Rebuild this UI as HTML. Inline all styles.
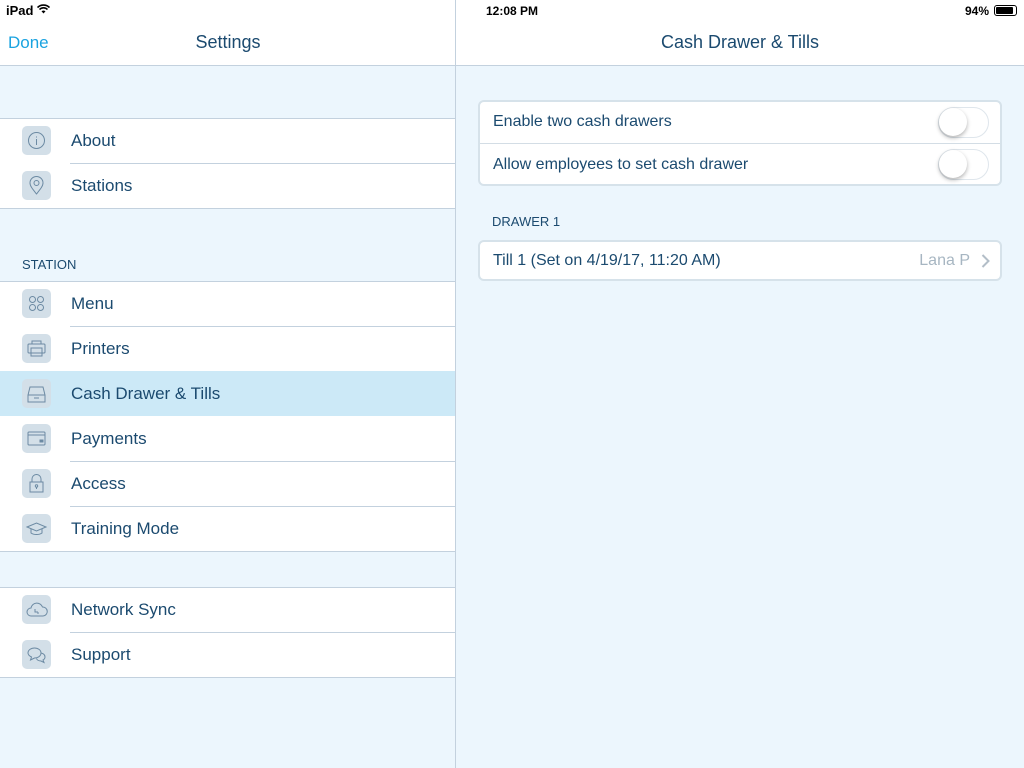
<!DOCTYPE html>
<html><head><style>
*{margin:0;padding:0;box-sizing:border-box}
body{width:1024px;height:768px;position:relative;background:#ecf6fd;font-family:"Liberation Sans",sans-serif;color:#1b4a6f;overflow:hidden}
.abs{position:absolute}
.bar{background:#fff;top:0;height:66px;border-bottom:1px solid #c3d1de}
.sec{left:0;width:455px;background:#fff;border-top:1px solid #c3d1de;border-bottom:1px solid #c3d1de}
.row{height:44px;position:relative;font-size:17px;line-height:43px;padding-left:71px}
.row+.row{margin-top:1px}
.row+.row::before{content:"";position:absolute;left:70px;right:0;top:-1px;border-top:1px solid #c3d1de}
.row.sel{background:#cce9f7}
.row.sel::before,.row.sel+.row::before{display:none}
.row.sel{margin-top:0;height:45px}
.ic{position:absolute;left:22px;top:7px;width:29px;height:29px;border-radius:5px;background:#d3dfe8}
.ic svg{width:29px;height:29px;fill:none;stroke:#6c8aa3;stroke-width:1}
.card{left:478px;width:524px;background:#fff;border:2px solid #d6e2ea;border-radius:6px}
.tog{position:absolute;right:11px;width:51px;height:31px;border:1.5px solid #dfe6ec;border-radius:16px;background:#fff}
.tog::after{content:"";position:absolute;left:0;top:0;width:28px;height:28px;border-radius:50%;background:#fff;box-shadow:0 2px 4px rgba(0,0,0,.3)}
</style></head><body>
<div class="abs bar" style="left:0;width:456px;border-right:1px solid #c3d1de"></div>
<div class="abs bar" style="left:456px;width:568px"></div>
<div class="abs" style="left:455px;top:66px;width:1px;height:702px;background:#c3d1de"></div>
<div class="abs" style="left:6px;top:3px;font-size:13px;color:#000;font-weight:bold">iPad</div>
<svg class="abs" style="left:37px;top:4px" width="13" height="10" viewBox="0 0 13 10"><path d="M0.5 3.5a8.5 8.5 0 0112 0M2.5 5.5a5.5 5.5 0 018 0" fill="none" stroke="#000" stroke-width="1.6"/><path d="M4.5 7.3a3 3 0 014 0L6.5 9.5z" fill="#000"/></svg>
<div class="abs" style="left:486px;top:4px;font-size:12px;color:#000;font-weight:bold">12:08 PM</div>
<div class="abs" style="left:965px;top:4px;font-size:12px;color:#000;font-weight:bold">94%</div>
<div class="abs" style="left:994px;top:5px;width:23px;height:11px;border:1px solid #000;border-radius:3px;padding:1px"><div style="width:92%;height:100%;background:#000;border-radius:1px"></div></div>
<div class="abs" style="left:8px;top:33px;font-size:17px;color:#1aa3e0">Done</div>
<div class="abs" style="left:0;width:456px;top:32px;text-align:center;font-size:18px">Settings</div>
<div class="abs" style="left:456px;width:568px;top:32px;text-align:center;font-size:18px">Cash Drawer &amp; Tills</div>

<div class="abs sec" style="top:118px">
<div class="row"><div class="ic"><svg viewBox="0 0 29 29"><circle cx="14.5" cy="14.5" r="8"/><path d="M14.5 13v6M14.5 10.5v1"/></svg></div>About</div>
<div class="row"><div class="ic"><svg viewBox="0 0 29 29"><path d="M14.5 23c-4-5-6.5-8-6.5-11a6.5 6.5 0 0113 0c0 3-2.5 6-6.5 11z"/><circle cx="14.5" cy="12" r="2.5"/></svg></div>Stations</div>
</div>
<div class="abs" style="left:22px;top:257px;font-size:13px">STATION</div>
<div class="abs sec" style="top:281px">
<div class="row"><div class="ic"><svg viewBox="0 0 29 29"><circle cx="10.5" cy="10.5" r="3"/><circle cx="18.5" cy="10.5" r="3"/><circle cx="10.5" cy="18.5" r="3"/><circle cx="18.5" cy="18.5" r="3"/></svg></div>Menu</div>
<div class="row"><div class="ic"><svg viewBox="0 0 29 29"><rect x="6" y="10" width="17" height="9" rx="1"/><rect x="10" y="7" width="9" height="3"/><rect x="9" y="14" width="11" height="8"/></svg></div>Printers</div>
<div class="row sel"><div class="ic" style="top:8px"><svg viewBox="0 0 29 29"><path d="M8 8h13l2 8v7H6v-7z"/><path d="M6 16h17M12 19h5"/></svg></div><span style="line-height:45px">Cash Drawer &amp; Tills</span></div>
<div class="row"><div class="ic"><svg viewBox="0 0 29 29"><rect x="6" y="8" width="17" height="13" rx="1"/><path d="M6 11h17"/><rect x="18" y="16" width="3" height="2" fill="#6c8aa3"/></svg></div>Payments</div>
<div class="row"><div class="ic"><svg viewBox="0 0 29 29"><path d="M10 13v-3a4.5 4.5 0 019 0v3"/><rect x="8" y="13" width="13" height="10"/><circle cx="14.5" cy="17" r="1.2"/><path d="M14.5 18v2"/></svg></div>Access</div>
<div class="row"><div class="ic"><svg viewBox="0 0 29 29"><path d="M5 13l9.5-4 9.5 4-9.5 4z"/><path d="M9 15v4c3 2 8 2 11 0v-4"/></svg></div>Training Mode</div>
</div>
<div class="abs sec" style="top:587px">
<div class="row"><div class="ic"><svg viewBox="0 0 29 29"><path d="M9 21a4 4 0 010-8 6 6 0 0111.5-1 4.5 4.5 0 01.5 9z"/><path d="M13 14v3h3M16 19v-2"/></svg></div>Network Sync</div>
<div class="row"><div class="ic"><svg viewBox="0 0 29 29"><path d="M6 13c0-3 3-5 6.5-5S19 10 19 13s-3 5-6.5 5l-4 2 1-3c-2-1-3.5-2-3.5-4z"/><path d="M19 13c2.5 0.5 4 2 4 4 0 1.5-1 2.5-2 3l1 2.5-3-1.5c-2 0-4-1-4.5-2.5"/></svg></div>Support</div>
</div>

<div class="abs card" style="top:100px;height:86px">
<div style="position:relative;height:42px;line-height:40px;padding-left:13px;font-size:16px;border-bottom:1px solid #d3dde5">Enable two cash drawers<div class="tog" style="top:5px"></div></div>
<div style="position:relative;height:42px;line-height:42px;padding-left:13px;font-size:16px">Allow employees to set cash drawer<div class="tog" style="top:5px"></div></div>
</div>
<div class="abs" style="left:492px;top:214px;font-size:13px">DRAWER 1</div>
<div class="abs card" style="top:240px;height:41px;line-height:37px;padding-left:13px;font-size:16px">Till 1 (Set on 4/19/17, 11:20 AM)<span style="position:absolute;right:30px;color:#a7b6c2">Lana P</span><svg style="position:absolute;right:10px;top:12px" width="9" height="14" viewBox="0 0 9 14"><path d="M1.5 1l6 6-6 6" fill="none" stroke="#b3bec8" stroke-width="2"/></svg></div>
</body></html>
